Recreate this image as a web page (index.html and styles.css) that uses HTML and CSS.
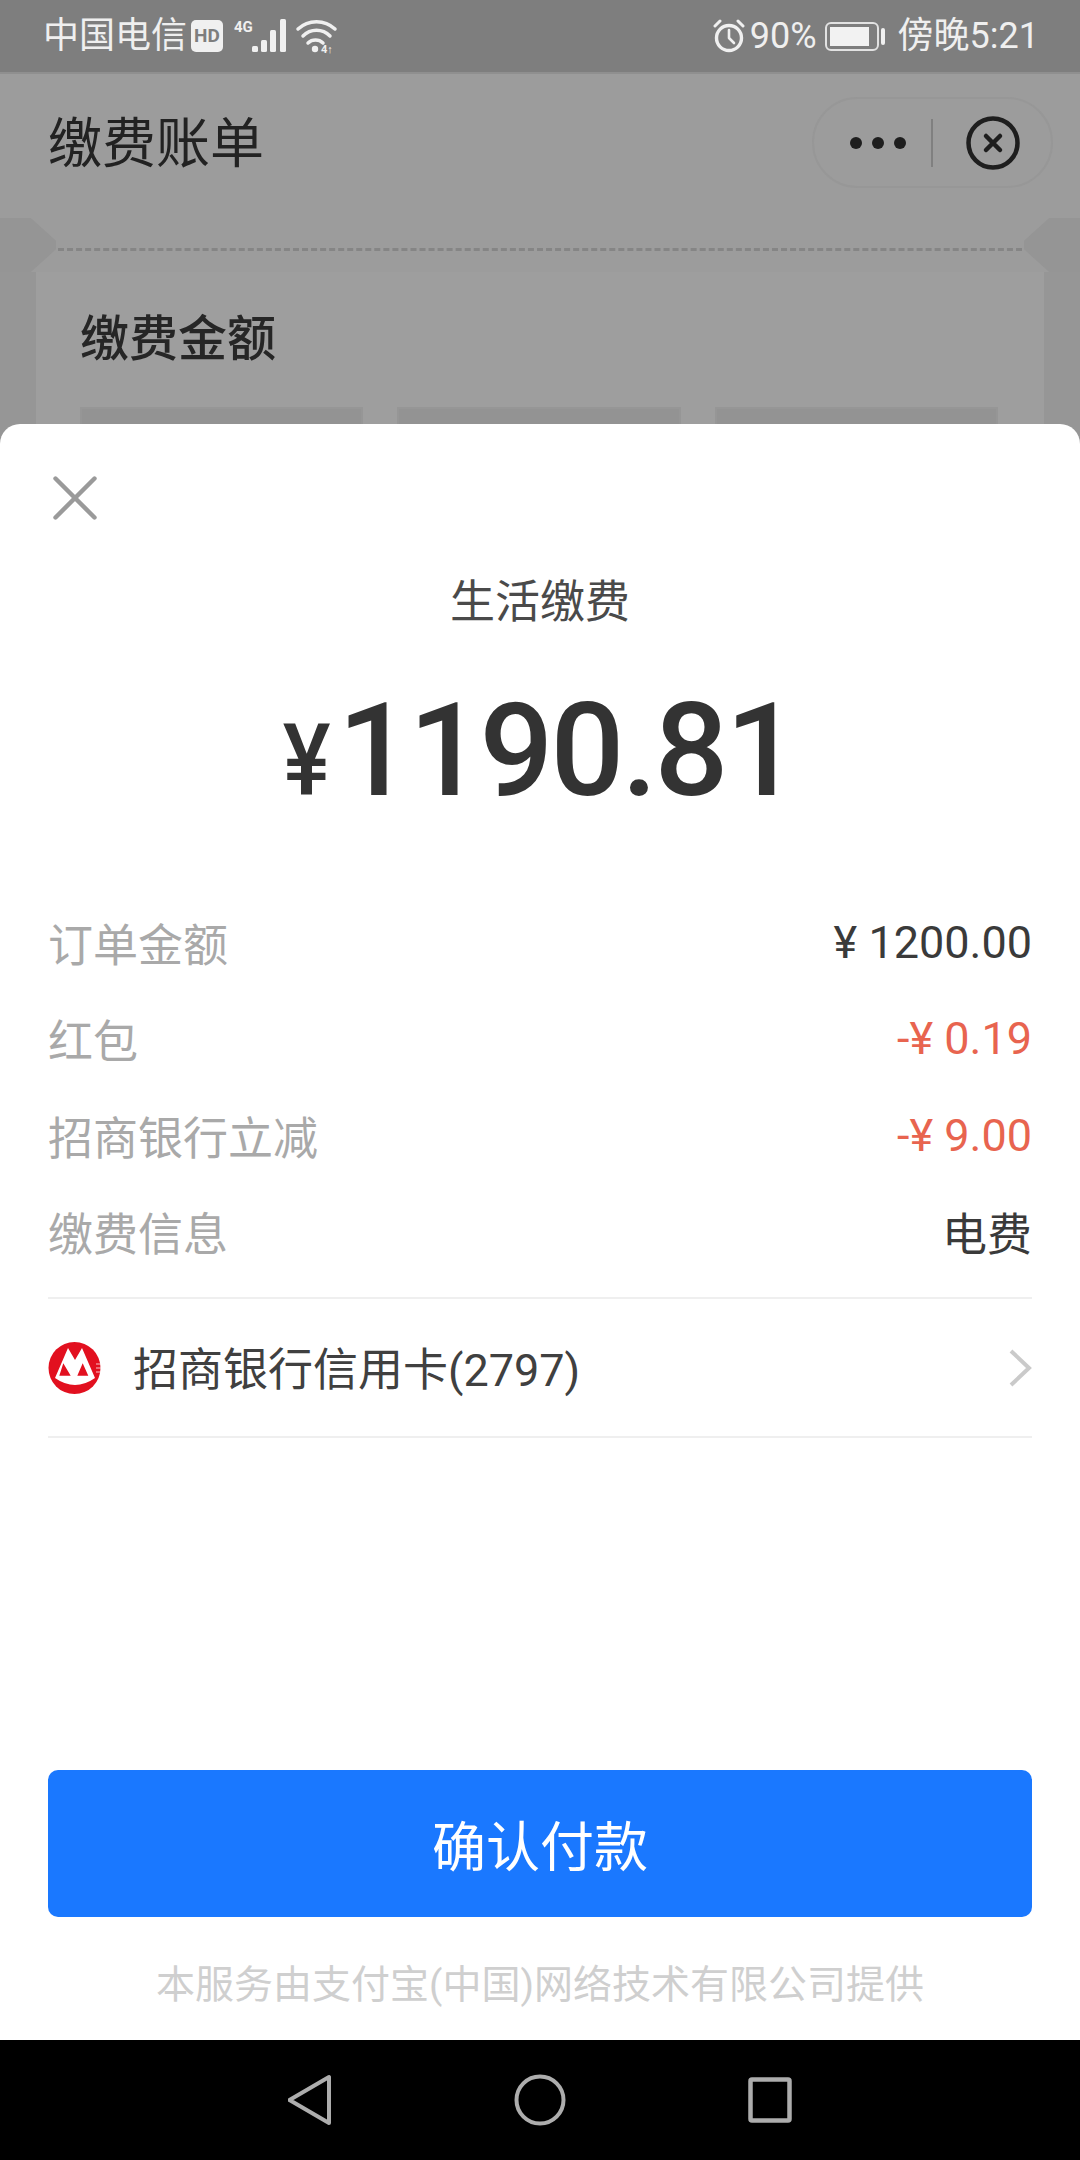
FILE: index.html
```html
<!DOCTYPE html>
<html lang="zh-CN">
<head>
<meta charset="utf-8">
<title>缴费账单</title>
<link rel="stylesheet" href="styles.css">
</head>
<body>
<div class="screen">
  <header class="status">
    <div class="status-side">
      <span class="status-text">中国电信</span>
      <svg class="ic-net" width="150" height="40" viewBox="0 0 150 40">
        <rect x="0" y="4" width="32" height="32" rx="5" fill="#f0f0f0"/>
        <text x="16" y="26" text-anchor="middle" class="hd-mark">HD</text>
        <text x="43" y="16" class="net-mark">4G</text>
        <g fill="#f0f0f0">
          <rect x="61" y="30" width="6" height="6" rx="1.5"/>
          <rect x="70" y="24" width="6" height="12" rx="1.5"/>
          <rect x="79" y="14" width="6" height="22" rx="1.5"/>
          <rect x="89" y="3" width="6" height="33" rx="1.5"/>
        </g>
        <g fill="none" stroke="#f0f0f0" stroke-width="3.5" stroke-linecap="round">
          <path d="M107 13a27 27 0 0 1 37 0"/>
          <path d="M112 20a19 19 0 0 1 27 0"/>
          <path d="M117 27a11 11 0 0 1 15 0"/>
        </g>
        <circle cx="124" cy="33" r="3.2" fill="#f0f0f0"/>
        <text x="130" y="37" class="net-small">4↑</text>
      </svg>
    </div>
    <div class="status-side">
      <svg class="ic-alarm" width="32" height="34" viewBox="0 0 32 34" fill="none" stroke="#f0f0f0">
        <circle cx="16" cy="19" r="12.5" stroke-width="3.4"/>
        <path d="M16 11v8l5 5" stroke-width="2.6" stroke-linecap="round" stroke-linejoin="round"/>
        <path d="M2 7l5-5M30 7l-5-5" stroke-width="3" stroke-linecap="round"/>
      </svg>
      <span class="status-text status-pct">90%</span>
      <div class="battery"><span class="battery-fill"></span></div>
      <span class="battery-tip"></span>
      <span class="status-text status-clock">傍晚5:21</span>
    </div>
  </header>

  <div class="appbar">
    <h1 class="appbar-title">缴费账单</h1>
    <div class="capsule">
      <span class="capsule-dots"><i></i><i></i><i></i></span>
      <span class="capsule-rule"></span>
      <svg width="54" height="54" viewBox="0 0 54 54" fill="none" stroke="#1e1e1e">
        <circle cx="27" cy="27" r="24.5" stroke-width="4.5"/>
        <path d="M20 20l14 14M34 20L20 34" stroke-width="4.5" stroke-linecap="round"/>
      </svg>
    </div>
  </div>

  <section class="ticket">
    <div class="ticket-cut"><span class="notch notch-l"></span><span class="notch notch-r"></span></div>
    <div class="ticket-body">
      <h2 class="ticket-title">缴费金额</h2>
      <div class="tiles"><span class="tile"></span><span class="tile"></span><span class="tile"></span></div>
    </div>
  </section>

  <main class="sheet">
    <button class="sheet-close" aria-label="关闭">
      <svg width="44" height="44" viewBox="0 0 44 44" fill="none" stroke="#9a9a9a" stroke-width="4.4" stroke-linecap="round"><path d="M2.500 2.500l39 39M41.500 2.500l-39 39"/></svg>
    </button>
    <div class="sheet-title">生活缴费</div>
    <div class="amount"><span class="amount-cur">¥</span><span class="amount-num">1190.81</span></div>

    <dl class="rows">
      <div class="row"><dt>订单金额</dt><dd>¥ 1200.00</dd></div>
      <div class="row"><dt>红包</dt><dd class="minus">-¥ 0.19</dd></div>
      <div class="row"><dt>招商银行立减</dt><dd class="minus">-¥ 9.00</dd></div>
      <div class="row"><dt>缴费信息</dt><dd>电费</dd></div>
    </dl>

    <div class="pay-method">
      <svg class="bank-logo" width="53" height="52" viewBox="0 0 53 52">
        <circle cx="26.500" cy="26" r="26" fill="#e2101f"/>
        <path d="M7 36L20 6l7 12 7-12 13 30Q27 50 7 36z" fill="#fff"/>
        <path d="M15.300 21.300l-4 12.400h11.400zM34.700 21.300l-5.400 12.400h11z" fill="#e2101f"/>
        <path class="logo-lines" d="M48 22h5M48 26h5M48 30h5" stroke="#fff" stroke-width="1.400"/>
      </svg>
      <span class="pay-name">招商银行信用卡(2797)</span>
      <svg class="chevron" width="24" height="40" viewBox="0 0 24 40" fill="none" stroke="#cacaca" stroke-width="4"><path d="M3 3l18 17L3 37"/></svg>
    </div>

    <button class="confirm">确认付款</button>
    <p class="provider">本服务由支付宝(中国)网络技术有限公司提供</p>
  </main>

  <nav class="softkeys">
    <svg width="44" height="52" viewBox="0 0 44 52" fill="none" stroke="#adadad" stroke-width="4" stroke-linejoin="round"><path d="M41 3v46L1.500 26z"/></svg>
    <svg width="52" height="52" viewBox="0 0 52 52" fill="none" stroke="#adadad" stroke-width="4"><circle cx="26" cy="26" r="23.500"/></svg>
    <svg width="44" height="46" viewBox="0 0 44 46" fill="none" stroke="#adadad" stroke-width="4.500" stroke-linejoin="round"><rect x="2.500" y="2.500" width="39" height="41" rx="1.500"/></svg>
  </nav>
</div>
</body>
</html>
```

FILE: styles.css
```css
* { box-sizing: border-box; }

html, body { margin: 0; padding: 0; }

body {
  background: #9c9c9c;
  font-family: Roboto, "Noto Sans CJK SC", sans-serif;
}

.screen {
  position: relative;
  width: 1080px;
  height: 2160px;
  overflow: hidden;
  display: flex;
  flex-direction: column;
  background: #9c9c9c;
}

/* status bar */
.status {
  height: 72px;
  flex: none;
  background: #7e7e7e;
  display: flex;
  justify-content: space-between;
  align-items: center;
  padding: 0 41px 0 43px;
}

.status-side { display: flex; align-items: center; }

.status-text {
  font-size: 36px;
  line-height: 40px;
  color: #efefef;
  font-weight: 400;
}

.ic-net { margin-left: 4px; }
.hd-mark { font: 700 19px Roboto, sans-serif; fill: #7e7e7e; }
.net-mark { font: 700 15px Roboto, sans-serif; fill: #f0f0f0; }
.net-small { font: 700 11px Roboto, sans-serif; fill: #f0f0f0; }

.status-pct { margin-left: 5px; }

.battery {
  width: 54px;
  height: 29px;
  margin-left: 8px;
  padding: 3px 8px 3px 3px;
  border: 2px solid #e2e2e2;
  border-radius: 6px;
}

.battery-fill { display: block; width: 100%; height: 100%; background: #f2f2f2; }

.battery-tip {
  width: 4px;
  height: 17px;
  margin-left: 2px;
  border-radius: 2px;
  background: #f0f0f0;
}

.status-clock { margin-left: 13px; }

/* mini-program title bar */
.appbar {
  height: 146px;
  flex: none;
  display: flex;
  justify-content: space-between;
  align-items: flex-start;
  padding: 23px 27px 0 48px;
  border-top: 2px solid #8f8f8f;
}

.appbar-title {
  margin: 8px 0 0;
  font-size: 54px;
  line-height: 80px;
  font-weight: 400;
  color: #222;
}

.capsule {
  width: 241px;
  height: 91px;
  display: flex;
  align-items: center;
  padding-left: 36px;
  border: 2px solid #979797;
  border-radius: 46px;
}

.capsule-dots { display: flex; gap: 10px; }
.capsule-dots i { width: 12px; height: 12px; border-radius: 50%; background: #1e1e1e; }
.capsule-rule { width: 2px; height: 48px; margin: 0 33px 0 25px; background: #808080; }

/* ticket card behind the sheet */
.ticket { flex: 1; display: flex; flex-direction: column; background: #969696; }

.ticket-cut {
  position: relative;
  height: 54px;
  background: #9c9c9c;
  flex: none;
}

.ticket-cut::after {
  content: "";
  position: absolute;
  left: 58px;
  right: 58px;
  top: 30px;
  border-top: 3px dashed #858585;
}

.notch {
  position: absolute;
  top: 0;
  width: 56px;
  height: 54px;
  background: #959595;
}

.notch-l { left: 0; clip-path: polygon(0 0, 55% 0, 100% 42%, 100% 58%, 55% 100%, 0 100%); }
.notch-r { right: 0; clip-path: polygon(100% 0, 45% 0, 0 42%, 0 58%, 45% 100%, 100% 100%); }

.ticket-body {
  flex: 1;
  margin: 0 36px;
  padding: 38px 46px 0 44px;
  background: #9e9e9e;
}

.ticket-title {
  margin: 0;
  font-size: 49px;
  line-height: 60px;
  font-weight: 500;
  color: #262626;
}

.tiles { display: flex; gap: 34px; margin-top: 37px; }
.tile { flex: 1; height: 60px; background: #939393; border: 2px solid #969696; }

/* payment sheet */
.sheet {
  position: absolute;
  left: 0;
  right: 0;
  top: 424px;
  bottom: 120px;
  background: #fff;
  border-radius: 20px 20px 0 0;
  padding: 0 48px;
  display: flex;
  flex-direction: column;
}

.sheet-close {
  align-self: flex-start;
  display: block;
  margin: 52px 0 0 5px;
  padding: 0;
  height: 44px;
  border: 0;
  background: none;
}

.sheet-title {
  margin-top: 53px;
  text-align: center;
  font-size: 45px;
  line-height: 60px;
  color: #4a4a4a;
}

.amount {
  margin-top: 53px;
  height: 130px;
  display: flex;
  justify-content: center;
  align-items: baseline;
  color: #333;
  font-weight: 500;
  line-height: 130px;
}

.amount-cur { display: inline-block; font-size: 100px; margin-right: 5px; transform: scaleX(.9); }
.amount-num { font-size: 130px; letter-spacing: -3px; margin-right: 4px; }

.rows { margin: 78px 0 0; }

.row {
  display: flex;
  justify-content: space-between;
  align-items: center;
  height: 96.500px;
  font-size: 45px;
}

.row dt { color: #a9a9a9; }
.row dd { margin: 0; color: #3a3a3a; }
.row dd.minus { color: #e8644f; }

.pay-method {
  margin-top: 17px;
  height: 141px;
  display: flex;
  align-items: center;
  border-top: 2px solid #efefef;
  border-bottom: 2px solid #efefef;
}

.bank-logo { flex: none; }
.logo-lines { opacity: .5; }

.pay-name {
  flex: 1;
  margin-left: 32px;
  padding-bottom: 3px;
  font-size: 45px;
  color: #404040;
}

.chevron { flex: none; }

.confirm {
  margin-top: auto;
  height: 147px;
  border: 0;
  border-radius: 10px;
  background: #1a78ff;
  color: #fff;
  font-family: inherit;
  font-size: 54px;
}

.provider {
  margin: 40px 0 27px;
  text-align: center;
  font-size: 39px;
  line-height: 56px;
  color: #cfcfcf;
}

/* android soft keys */
.softkeys {
  height: 120px;
  flex: none;
  position: relative;
  background: #000;
  display: flex;
  gap: 182px;
  align-items: center;
  padding-left: 288px;
}
```
